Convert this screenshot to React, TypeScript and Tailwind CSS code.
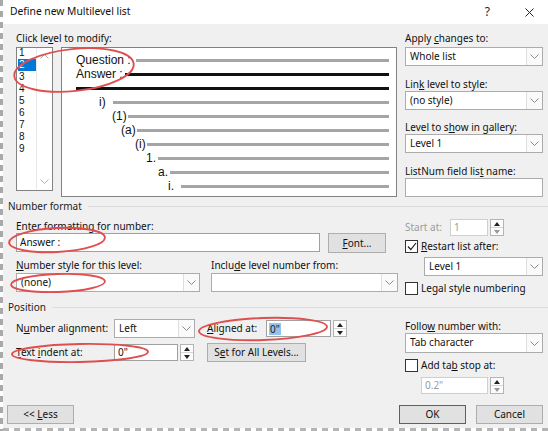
import React from 'react'

const levels = [1, 2, 3, 4, 5, 6, 7, 8, 9]

// preview rows: text offset / width before the line, line colour
const previewRows = [
  { t: 'Question :', pad: 'pl-[14px]', w: 'w-[60px]', line: 'bg-[#a5a5a5]' },
  { t: 'Answer :', pad: 'pl-[14px]', w: 'w-[49px]', line: 'bg-[#111]' },
  { t: '', pad: 'pl-[14px]', w: 'w-[0px]', line: 'bg-[#111]' },
  { t: 'i)', pad: 'pl-[37px]', w: 'w-[14px]', line: 'bg-[#a5a5a5]' },
  { t: '(1)', pad: 'pl-[50px]', w: 'w-[16px]', line: 'bg-[#a5a5a5]' },
  { t: '(a)', pad: 'pl-[59px]', w: 'w-[16px]', line: 'bg-[#a5a5a5]' },
  { t: '(i)', pad: 'pl-[73px]', w: 'w-[12px]', line: 'bg-[#a5a5a5]' },
  { t: '1.', pad: 'pl-[84px]', w: 'w-[12px]', line: 'bg-[#a5a5a5]' },
  { t: 'a.', pad: 'pl-[96px]', w: 'w-[12px]', line: 'bg-[#a5a5a5]' },
  { t: 'i.', pad: 'pl-[106px]', w: 'w-[13px]', line: 'bg-[#a5a5a5]' },
]

function Chevron({ color = '#8a8a8a' }: { color?: string }) {
  return (
    <svg width="9" height="5" viewBox="0 0 9 5">
      <polyline points="0.5,0.5 4.5,4.5 8.5,0.5" fill="none" stroke={color} strokeWidth="1" />
    </svg>
  )
}

function ChevronUp() {
  return (
    <svg width="9" height="5" viewBox="0 0 9 5">
      <polyline points="0.5,4.5 4.5,0.5 8.5,4.5" fill="none" stroke="#b0b0b0" strokeWidth="1" />
    </svg>
  )
}

function Select({ value, className = '' }: { value: string; className?: string }) {
  return (
    <div className={`flex h-[19px] border border-[#acacac] bg-white ${className}`}>
      <span className="flex-1 pl-[4px] leading-[17px] whitespace-nowrap overflow-hidden">{value}</span>
      <div className="w-[16px] border-l border-[#dedede] bg-[#fafafa] flex items-center justify-center">
        <Chevron />
      </div>
    </div>
  )
}

function SpinButtons({ disabled = false }: { disabled?: boolean }) {
  return (
    <div className="w-[14px] h-full ml-[2px] border border-[#b4b4b4] bg-[#fcfcfc] flex flex-col">
      <div className="flex-1 flex items-center justify-center border-b border-[#d6d6d6]">
        <svg width="6" height="4" viewBox="0 0 6 4">
          <polygon points="0,4 3,0 6,4" fill="#222" />
        </svg>
      </div>
      <div className="flex-1 flex items-center justify-center">
        <svg width="6" height="4" viewBox="0 0 6 4">
          <polygon points="0,0 6,0 3,4" fill={disabled ? '#9a9a9a' : '#222'} />
        </svg>
      </div>
    </div>
  )
}

function Checkbox({ checked = false }: { checked?: boolean }) {
  return (
    <div className="w-[13px] h-[13px] border border-[#333] bg-white flex items-center justify-center">
      {checked && (
        <svg width="10" height="9" viewBox="0 0 10 9">
          <path d="M1 4.5 L3.8 7.5 L9 1" fill="none" stroke="#222" strokeWidth="1.2" />
        </svg>
      )}
    </div>
  )
}

function Button({ children, className = '' }: { children: React.ReactNode; className?: string }) {
  return (
    <div className={`h-[19px] border bg-[#e1e1e1] flex items-center justify-center ${className}`}>
      {children}
    </div>
  )
}

function SectionHeader({ title }: { title: string }) {
  return (
    <div className="flex items-center h-[14px] pl-[5px]">
      <span className="leading-[14px] text-[#222]">{title}</span>
      <div className="flex-1 h-px bg-[#dcdcdc] ml-[6px]" />
    </div>
  )
}

export default function App() {
  return (
    <div className="relative w-[548px] h-[431px] overflow-hidden flex bg-white text-[10px] text-[#111] font-['Noto_Sans',sans-serif]">
      {/* torn left edge */}
      <div className="w-[3px] h-full bg-[repeating-linear-gradient(to_bottom,#a9a9a9_0px,#a9a9a9_6px,#ffffff_6px,#ffffff_11px)]" />

      <div className="flex-1 flex flex-col">
        {/* title bar */}
        <div className="h-[24px] bg-white flex items-center pl-[7px]">
          <span className="text-[10.3px] text-[#111]">Define new Multilevel list</span>
          <div className="flex-1" />
          <span className="text-[12px] text-[#222]">?</span>
          <svg className="ml-[35px] mr-[14px]" width="9" height="9" viewBox="0 0 9 9">
            <path d="M0.5 0.5 L8.5 8.5 M8.5 0.5 L0.5 8.5" stroke="#222" strokeWidth="1" />
          </svg>
        </div>

        <div className="flex-1 bg-[#f0f0f0] flex flex-col">
          {/* top area */}
          <div className="flex pt-[7px] pl-[13px]">
            <div className="w-[381px]">
              <div className="h-[14px] leading-[14px]">
                Click le<span className="underline">v</span>el to modify:
              </div>
              <div className="flex mt-[2px] gap-[8px]">
                <div className="w-[37px] h-[144px] border border-[#828282] bg-white flex">
                  <div className="flex-1 -mt-[1px] leading-[12px] font-['Liberation_Sans',Arial,sans-serif] text-[10px]">
                    {levels.map((n) => (
                      <div key={n} className="h-[12px] leading-[12px]">
                        <span
                          className={
                            n === 2
                              ? 'block w-[18px] ml-[1px] pl-[1px] leading-[12px] bg-[#0078d7] text-white'
                              : 'block pl-[2px] leading-[12px]'
                          }
                        >
                          {n}
                        </span>
                      </div>
                    ))}
                  </div>
                  <div className="w-[16px] border-l border-[#e8e8e8] flex flex-col items-center justify-between pt-[6px] pb-[6px]">
                    <ChevronUp />
                    <Chevron color="#b0b0b0" />
                  </div>
                </div>
                <div className="w-[336px] h-[150px] border border-[#828282] bg-white pt-[5px] pr-[7px] font-['Liberation_Sans',Arial,sans-serif] text-[12px] text-[#111]">
                  {previewRows.map((r, i) => (
                    <div key={i} className={`flex items-center h-[14px] ${r.pad}`}>
                      <span className={`${r.w} shrink-0 whitespace-nowrap leading-[14px]`}>{r.t}</span>
                      <div className={`flex-1 h-[3px] ${r.line}`} />
                    </div>
                  ))}
                </div>
              </div>
            </div>

            <div className="ml-[8px] w-[138px]">
              <div className="h-[14px] leading-[14px]">
                Apply <span className="underline">c</span>hanges to:
              </div>
              <Select value="Whole list" className="mt-[2px]" />
              <div className="h-[14px] leading-[14px] mt-[11px]">
                Lin<span className="underline">k</span> level to style:
              </div>
              <Select value="(no style)" />
              <div className="h-[14px] leading-[14px] mt-[10px]">
                Level to s<span className="underline">h</span>ow in gallery:
              </div>
              <Select value="Level 1" />
              <div className="h-[14px] leading-[14px] mt-[11px]">
                ListNum field lis<span className="underline">t</span> name:
              </div>
              <div className="h-[19px] border border-[#acacac] bg-white" />
            </div>
          </div>

          {/* number format */}
          <div className="mt-[2px]">
            <SectionHeader title="Number format" />
          </div>
          <div className="flex pl-[13px] mt-[6px]">
            <div className="w-[382px]">
              <div className="h-[14px] leading-[14px]">Enter formatting for number:</div>
              <div className="flex">
                <div className="w-[304px] h-[19px] border border-[#a0a0a0] bg-white pl-[3px] leading-[17px]">
                  Answer :
                </div>
                <Button className="ml-[8px] w-[58px] h-[20px] border-[#adadad]">
                  <span>
                    <span className="underline">F</span>ont...
                  </span>
                </Button>
              </div>
              <div className="flex mt-[5px] h-[14px] leading-[14px]">
                <span className="w-[195px]">
                  <span className="underline">N</span>umber style for this level:
                </span>
                <span>
                  Inclu<span className="underline">d</span>e level number from:
                </span>
              </div>
              <div className="flex mt-[1px]">
                <Select value="(none)" className="w-[184px]" />
                <Select value="" className="w-[187px] ml-[11px]" />
              </div>
            </div>

            <div className="ml-[7px] w-[138px]">
              <div className="flex items-center h-[17px]">
                <span className="w-[45px] text-[#9c9c9c]">Start at:</span>
                <div className="w-[38px] h-full border border-[#cfcfcf] bg-white pl-[3px] leading-[15px] text-[#9c9c9c]">
                  1
                </div>
                <SpinButtons disabled />
              </div>
              <div className="flex items-center mt-[4px] h-[13px]">
                <Checkbox checked />
                <span className="ml-[3px] leading-[13px]">
                  <span className="underline">R</span>estart list after:
                </span>
              </div>
              <Select value="Level 1" className="mt-[4px] ml-[19px] w-[119px]" />
              <div className="flex items-center mt-[6px] h-[13px]">
                <Checkbox />
                <span className="ml-[3px] leading-[13px]">
                  Le<span className="underline">g</span>al style numbering
                </span>
              </div>
            </div>
          </div>

          {/* position */}
          <div className="mt-[5px]">
            <SectionHeader title="Position" />
          </div>
          <div className="flex pl-[13px] mt-[5px]">
            <div className="w-[382px]">
              <div className="flex items-center h-[19px]">
                <span className="w-[98px]">
                  N<span className="underline">u</span>mber alignment:
                </span>
                <Select value="Left" className="w-[81px]" />
                <span className="w-[59px] ml-[12px]">
                  <span className="underline">A</span>ligned at:
                </span>
                <div className="flex h-[17px]">
                  <div className="w-[65px] h-full border border-[#a0a0a0] bg-white pl-[2px] flex items-center">
                    <span className="bg-[#93c2ef] px-[1px] leading-[12px] text-[#1a1a1a]">0"</span>
                  </div>
                  <SpinButtons />
                </div>
              </div>
              <div className="flex items-center h-[19px] mt-[5px]">
                <span className="w-[98px]">
                  <span className="underline">T</span>ext <span className="underline">i</span>ndent at:
                </span>
                <div className="flex h-[17px]">
                  <div className="w-[64px] h-full border border-[#a0a0a0] bg-white pl-[3px] leading-[15px]">0"</div>
                  <SpinButtons />
                </div>
                <Button className="ml-[13px] w-[99px] border-[#adadad]">
                  <span>
                    S<span className="underline">e</span>t for All Levels...
                  </span>
                </Button>
              </div>
            </div>

            <div className="ml-[7px] w-[138px]">
              <div className="h-[14px] leading-[14px]">
                Follo<span className="underline">w</span> number with:
              </div>
              <Select value="Tab character" className="h-[20px]" />
              <div className="flex items-center mt-[6px] h-[13px]">
                <Checkbox />
                <span className="ml-[3px] leading-[13px]">
                  Add ta<span className="underline">b</span> stop at:
                </span>
              </div>
              <div className="flex h-[17px] mt-[5px] ml-[16px]">
                <div className="w-[67px] h-full border border-[#cfcfcf] bg-white pl-[3px] leading-[15px] text-[#9c9c9c]">
                  0.2"
                </div>
                <SpinButtons disabled />
              </div>
            </div>
          </div>

          {/* footer buttons */}
          <div className="flex mt-[11px]">
            <Button className="ml-[4px] w-[67px] border-[#adadad]">
              <span>
                &lt;&lt; <span className="underline">L</span>ess
              </span>
            </Button>
            <div className="flex-1" />
            <Button className="w-[67px] border-[#0078d7]">OK</Button>
            <Button className="ml-[10px] mr-[5px] w-[67px] border-[#adadad]">Cancel</Button>
          </div>
        </div>

        {/* torn bottom edge */}
        <div className="h-[3px] bg-[repeating-linear-gradient(to_right,#b5b5b5_0px,#b5b5b5_6px,#ffffff_6px,#ffffff_11px)]" />
      </div>

      {/* red annotation ellipses */}
      <svg className="absolute inset-0 pointer-events-none" width="548" height="431" viewBox="0 0 548 431">
        <g fill="none" stroke="#df4f4f" strokeWidth="1.9">
          <ellipse cx="74" cy="70" rx="60" ry="21" transform="rotate(-6 74 70)" />
          <ellipse cx="57" cy="240" rx="48" ry="12" transform="rotate(-3 57 240)" />
          <ellipse cx="58" cy="283" rx="47" ry="9" transform="rotate(-2 58 283)" />
          <ellipse cx="263" cy="329" rx="64" ry="11" transform="rotate(-2 263 329)" />
          <ellipse cx="80" cy="353" rx="68" ry="9" transform="rotate(-1 80 353)" />
        </g>
      </svg>
    </div>
  )
}
